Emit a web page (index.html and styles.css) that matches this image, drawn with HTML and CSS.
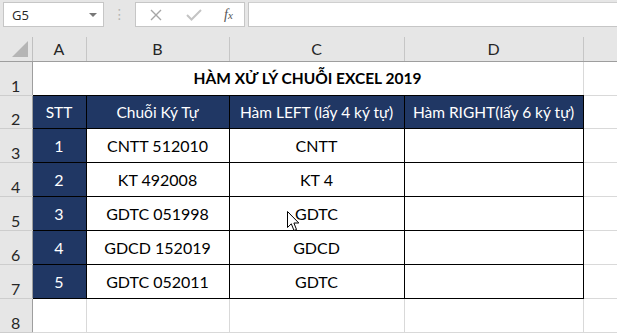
FILE: index.html
```html
<!DOCTYPE html>
<html>
<head>
<meta charset="utf-8">
<link rel="stylesheet" href="styles.css">
</head>
<body>
<div class="toolbar">
  <div class="namebox"><span class="nb-text">G5</span><span class="nb-arrow"></span></div>
  <div class="dots">⋮</div>
  <div class="fbuttons">
    <svg class="ic-x" width="12" height="12" viewBox="0 0 12 12"><path d="M1 1 L11 11 M11 1 L1 11" stroke="#a6a6a6" stroke-width="1.4" fill="none"/></svg>
    <svg class="ic-ok" width="16" height="12" viewBox="0 0 16 12"><path d="M1 6 L5.5 10.5 L15 1" stroke="#c4c4c4" stroke-width="2" fill="none"/></svg>
    <span class="fx">f<span class="fx-x">x</span></span>
  </div>
  <div class="finput"></div>
</div>
<table class="sheet">
  <colgroup>
    <col class="c-rh"><col class="c-a"><col class="c-b"><col class="c-c"><col class="c-d"><col class="c-e">
  </colgroup>
  <tr class="r-head">
    <th class="corner"><span class="tri"></span></th>
    <th class="ch">A</th><th class="ch">B</th><th class="ch">C</th><th class="ch">D</th><th class="ch last"></th>
  </tr>
  <tr class="r-row">
    <th class="rh">1</th>
    <td class="title" colspan="4">HÀM XỬ LÝ CHUỖI EXCEL 2019</td>
    <td class="g"></td>
  </tr>
  <tr class="r-row r2">
    <th class="rh">2</th>
    <td class="hd">STT</td><td class="hd">Chuỗi Ký Tự</td><td class="hd">Hàm LEFT (lấy 4 ký tự)</td><td class="hd">Hàm RIGHT(lấy 6 ký tự)</td>
    <td class="g"></td>
  </tr>
  <tr class="r-row">
    <th class="rh">3</th>
    <td class="num">1</td><td class="t">CNTT 512010</td><td class="t">CNTT</td><td class="t"></td><td class="g"></td>
  </tr>
  <tr class="r-row">
    <th class="rh">4</th>
    <td class="num">2</td><td class="t">KT 492008</td><td class="t">KT 4</td><td class="t"></td><td class="g"></td>
  </tr>
  <tr class="r-row">
    <th class="rh">5</th>
    <td class="num">3</td><td class="t">GDTC 051998</td><td class="t">GDTC</td><td class="t"></td><td class="g"></td>
  </tr>
  <tr class="r-row">
    <th class="rh">6</th>
    <td class="num">4</td><td class="t">GDCD 152019</td><td class="t">GDCD</td><td class="t"></td><td class="g"></td>
  </tr>
  <tr class="r-row">
    <th class="rh">7</th>
    <td class="num">5</td><td class="t">GDTC 052011</td><td class="t">GDTC</td><td class="t"></td><td class="g"></td>
  </tr>
  <tr class="r-row">
    <th class="rh">8</th>
    <td class="g"></td><td class="g"></td><td class="g"></td><td class="g"></td><td class="g"></td>
  </tr>
</table>
<svg class="cursor" width="13" height="21" viewBox="0 0 13 21"><path d="M0.5 0.5 L0.5 16.5 L4.3 12.8 L7 19.5 L9.5 18.5 L6.9 12 L11.8 12 Z" fill="#fff" stroke="#000" stroke-width="1"/></svg>
</body>
</html>
```
FILE: styles.css
```css
html, body {
  margin: 0;
  padding: 0;
  background: #ffffff;
  width: 617px;
  height: 336px;
  overflow: hidden;
  position: relative;
}
body {
  font-family: "Lato", "Open Sans", sans-serif;
}
.toolbar {
  height: 37px;
  background: #e6e6e6;
  display: flex;
  align-items: flex-start;
  padding-top: 2px;
  box-sizing: border-box;
}
.namebox {
  margin-left: 3px;
  width: 101px;
  height: 25px;
  box-sizing: border-box;
  background: #fff;
  border: 1px solid #c6c6c6;
  display: flex;
  align-items: center;
  justify-content: space-between;
  padding: 0 6px 0 8px;
  font-family: "Open Sans", sans-serif;
  font-size: 13px;
  color: #262626;
}
.nb-arrow {
  width: 0;
  height: 0;
  border-left: 4px solid transparent;
  border-right: 4px solid transparent;
  border-top: 4px solid #777;
}
.dots {
  width: 31px;
  text-align: center;
  color: #b5b5b5;
  font-size: 14px;
  line-height: 25px;
  font-family: "DejaVu Sans", sans-serif;
}
.fbuttons {
  width: 110px;
  height: 25px;
  box-sizing: border-box;
  background: #fff;
  border: 1px solid #c6c6c6;
  display: flex;
  align-items: center;
  padding-left: 14px;
}
.ic-x { margin-right: 24px; }
.ic-ok { margin-right: 22px; }
.fx {
  font-family: "Liberation Serif", serif;
  font-style: italic;
  font-size: 14px;
  color: #555;
}
.fx-x { font-size: 11px; }
.finput {
  margin-left: 3px;
  flex: 1;
  height: 25px;
  box-sizing: border-box;
  background: #fff;
  border: 1px solid #c6c6c6;
  border-right: none;
  border-top-color: #cfcfcf;
}
.sheet {
  border-collapse: collapse;
  table-layout: fixed;
  width: 617px;
}
.c-rh { width: 32px; }
.c-a { width: 54px; }
.c-b { width: 143px; }
.c-c { width: 175px; }
.c-d { width: 179px; }
.c-e { width: 34px; }
.sheet th, .sheet td {
  padding: 0;
  overflow: hidden;
  white-space: nowrap;
}
.r-head { height: 24px; }
.r-row { height: 34px; }
.r-row.r2 { height: 33px; }
.corner {
  background: #e6e6e6;
  border-right: 1px solid #c0c0c0;
  border-bottom: 1px solid #9e9e9e;
  position: relative;
}
.tri {
  position: absolute;
  right: 4px;
  bottom: 4px;
  width: 0;
  height: 0;
  border-left: 16px solid transparent;
  border-bottom: 16px solid #b5b5b5;
}
.ch {
  background: #e6e6e6;
  font-weight: normal;
  font-size: 16px;
  color: #262626;
  text-align: center;
  border-right: 1px solid #c6c6c6;
  border-bottom: 1px solid #9e9e9e;
  vertical-align: middle;
}
.ch.last { border-right: none; }
.rh {
  background: #e6e6e6;
  font-weight: normal;
  font-size: 16px;
  color: #262626;
  text-align: center;
  vertical-align: bottom;
  padding-bottom: 4px;
  border-right: 1px solid #9e9e9e;
  border-bottom: 1px solid #cdcdcd;
}
.g {
  border: 1px solid #d9d9d9;
}
.title {
  font-weight: bold;
  font-size: 15.5px;
  color: #000;
  text-align: center;
  vertical-align: middle;
  padding-top: 2px;
  border-bottom: 1px solid #000;
  border-right: 1px solid #d9d9d9;
}
.hd {
  background: #203764;
  color: #fff;
  font-size: 15.5px;
  text-align: center;
  vertical-align: middle;
  padding-top: 2px;
  border: 1px solid #000;
}
.num {
  background: #203764;
  color: #fff;
  font-size: 16px;
  text-align: center;
  vertical-align: middle;
  padding-top: 2px;
  border: 1px solid #000;
}
.t {
  color: #000;
  font-size: 16px;
  text-align: center;
  vertical-align: middle;
  padding-top: 2px;
  border: 1px solid #000;
}
.cursor {
  position: absolute;
  left: 287px;
  top: 211px;
}
```
